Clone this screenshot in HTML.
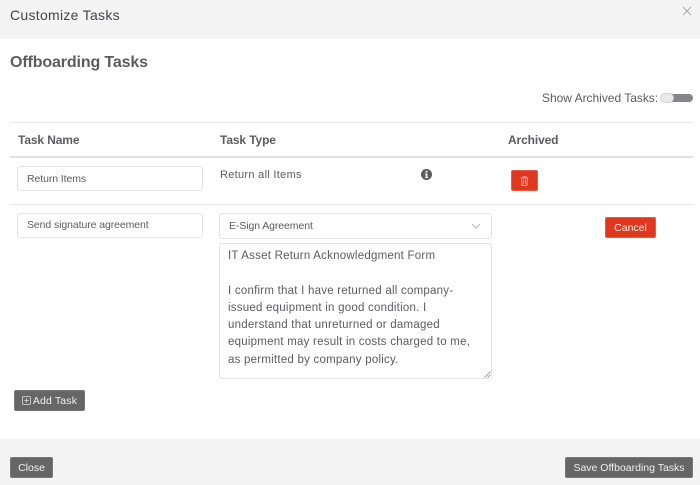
<!DOCTYPE html>
<html>
<head>
<meta charset="utf-8">
<style>
html,body{margin:0;padding:0;background:#fff}
body{width:700px;height:485px;position:relative;overflow:hidden;font-family:"Liberation Sans",sans-serif;color:#5c5c60}
.a{position:absolute;white-space:nowrap}
.bg{position:absolute;background:#f4f4f4;left:0;width:700px}
.ln{position:absolute;left:10px;width:683px;background:#e6e6ec}
.box{position:absolute;box-sizing:border-box;background:#fff;border:1px solid #e2e2ea;border-radius:3px}
.btn{position:absolute;box-sizing:border-box;border-radius:2px;color:#f0f0f0;display:flex;align-items:center;justify-content:center;white-space:nowrap;font-size:10.5px;letter-spacing:0}
.g{background:#666;border:1px solid #777}
.r{background:#e0371f;border:1px solid #ea5a45}
.th{font-weight:bold;font-size:12px;letter-spacing:-.12px;line-height:14px;color:#5c5c60}
.t{font-size:10.5px;line-height:14px;letter-spacing:-.09px;color:#5c5c60}
.ta{font-size:11.5px;line-height:17.3px;letter-spacing:.23px;color:#5c5c60}
</style>
</head>
<body>
<div class="bg" style="top:0;height:39px"></div>
<div class="a" style="left:10px;top:7px;font-size:14px;line-height:17px;letter-spacing:.29px;color:#46464a">Customize Tasks</div>
<svg class="a" style="left:681px;top:5px" width="12" height="12" viewBox="0 0 12 12"><path d="M2 2L10 10M10 2L2 10" stroke="#a8a8a8" stroke-width="1" fill="none"/></svg>

<div class="a" style="left:10px;top:53px;font-size:16px;line-height:19px;font-weight:bold;letter-spacing:-.13px;color:#5c5c60">Offboarding Tasks</div>

<div class="a" style="left:542px;top:91px;font-size:12px;line-height:14px;letter-spacing:-.02px;color:#5c5c60">Show Archived Tasks:</div>
<div class="a" style="left:661px;top:94px;width:32px;height:8px;border-radius:4px;background:#85858a"></div>
<div class="a" style="left:660px;top:93px;width:14px;height:10px;box-sizing:border-box;border-radius:5px;background:#eaeaea;border:1px solid #d0d0d0"></div>

<div class="ln" style="top:122px;height:1px"></div>
<div class="a th" style="left:18px;top:133px">Task Name</div>
<div class="a th" style="left:220px;top:133px">Task Type</div>
<div class="a th" style="left:508px;top:133px">Archived</div>
<div class="ln" style="top:156px;height:1.5px;background:#e0e0e8"></div>

<div class="box" style="left:17px;top:166px;width:186px;height:25px"></div>
<div class="a t" style="left:27px;top:172px">Return Items</div>
<div class="a" style="left:220px;top:168px;font-size:11px;line-height:14px;letter-spacing:.3px">Return all Items</div>
<svg class="a" style="left:420.5px;top:168.5px" width="11" height="11" viewBox="0 0 10 10"><circle cx="5" cy="5" r="5" fill="#5c5c60"/><rect x="4.2" y="1.7" width="1.6" height="1.5" fill="#fff"/><path d="M3.6 4.1H5.8V7.3H6.5V8.2H3.6V7.3H4.3V5H3.6Z" fill="#fff"/></svg>
<div class="btn r" style="left:511px;top:170px;width:27px;height:21px">
<svg width="9" height="10" viewBox="0 0 9 10"><path d="M0.8 2H8.2M3 2V0.8H6V2M1.6 2L2 9.3H7L7.4 2M3.5 3.6V7.8M5.5 3.6V7.8" stroke="#f8c4bb" stroke-width=".8" fill="none"/></svg>
</div>
<div class="ln" style="top:204px;height:1px"></div>

<div class="box" style="left:17px;top:213px;width:186px;height:25px"></div>
<div class="a t" style="left:27px;top:218px">Send signature agreement</div>

<div class="box" style="left:219px;top:213px;width:273px;height:26px"></div>
<div class="a t" style="left:229px;top:219px">E-Sign Agreement</div>
<svg class="a" style="left:471px;top:223px" width="10" height="6" viewBox="0 0 10 6"><path d="M1 1L5 5L9 1" stroke="#b5b5b8" stroke-width="1" fill="none"/></svg>

<div class="box" style="left:219px;top:243px;width:273px;height:136px"></div>
<div class="a ta" style="left:228px;top:248px">IT Asset Return Acknowledgment Form</div>
<div class="a ta" style="left:228px;top:282.5px">I confirm that I have returned all company-<br>issued equipment in good condition. I<br>understand that unreturned or damaged<br>equipment may result in costs charged to me,<br>as permitted by company policy.</div>
<svg class="a" style="left:484px;top:371px" width="7" height="7" viewBox="0 0 7 7"><path d="M0.5 6.5L6.5 0.5M3.5 6.5L6.5 3.5" stroke="#8a8a8a" stroke-width=".8" fill="none"/></svg>

<div class="btn r" style="left:605px;top:217px;width:51px;height:21px">Cancel</div>

<div class="btn g" style="left:14px;top:390px;width:71px;height:21px;letter-spacing:.15px">
<svg style="margin-right:2px" width="9" height="9" viewBox="0 0 9 9"><rect x=".5" y=".5" width="8" height="8" rx="1.2" stroke="#ddd" fill="none" stroke-width=".8"/><path d="M4.5 2.2V6.8M2.2 4.5H6.8" stroke="#ddd" stroke-width=".8"/></svg>Add Task</div>

<div class="bg" style="top:439px;height:46px"></div>
<div class="btn g" style="left:10px;top:457px;width:43px;height:21px">Close</div>
<div class="btn g" style="left:565px;top:457px;width:128px;height:21px">Save Offboarding Tasks</div>
</body>
</html>
